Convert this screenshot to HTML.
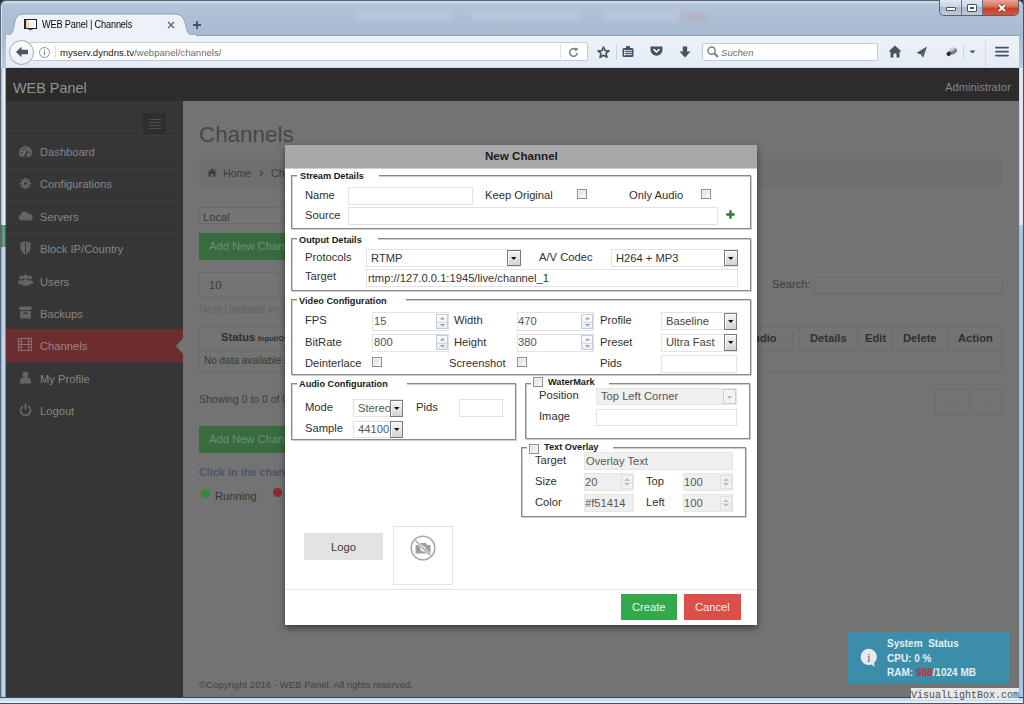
<!DOCTYPE html>
<html><head><meta charset="utf-8">
<style>
*{box-sizing:border-box;margin:0;padding:0}
html,body{width:1024px;height:704px;overflow:hidden;background:#2f343c;font-family:"Liberation Sans",sans-serif}
.a{position:absolute}
.t{position:absolute;white-space:nowrap;line-height:normal}
svg{overflow:visible}
</style></head><body>
<div class="a" style="left:0px;top:0px;width:1024px;height:704px;background:linear-gradient(#d3dfec 0px,#b2c4da 4px,#adbfd5 18px,#a9bbd0 35px,#b9cde3 70px,#c3d7ec 400px,#c4d8ee 704px);border:1px solid #5b6473;border-radius:6px 6px 0 0"></div>
<div class="a" style="left:356px;top:11px;width:94px;height:10px;background:rgba(225,232,242,.22);filter:blur(2.5px)"></div>
<div class="a" style="left:472px;top:11px;width:106px;height:10px;background:rgba(225,232,242,.22);filter:blur(2.5px)"></div>
<div class="a" style="left:604px;top:11px;width:108px;height:10px;background:rgba(225,232,242,.18);filter:blur(2.5px)"></div>
<div class="a" style="left:680px;top:12px;width:30px;height:9px;background:rgba(170,120,130,.25);filter:blur(2.5px)"></div>
<div class="a" style="left:939px;top:0px;width:80px;height:16px;border:1px solid #57606e;border-top:none;border-radius:0 0 5px 5px;overflow:hidden;background:linear-gradient(#dfe7f1,#c9d5e3 45%,#a9b9cc 50%,#bfcbdb)"><div style="position:absolute;left:21px;top:0;width:1px;height:16px;background:#6a7484"></div><div style="position:absolute;left:42px;top:0;width:1px;height:16px;background:#6a7484"></div><div style="position:absolute;left:43px;top:0;width:37px;height:16px;background:linear-gradient(#e8a79a,#d66a55 45%,#c7402a 50%,#d7593f)"></div><div style="position:absolute;left:6px;top:7px;width:10px;height:4px;background:#fff;border:1px solid #4a5260;border-radius:1px"></div><div style="position:absolute;left:27px;top:4px;width:10px;height:8px;background:#fff;border:1px solid #4a5260;border-radius:1px"><div style="position:absolute;left:2px;top:2px;width:4px;height:2px;border:1px solid #4a5260"></div></div></div>
<svg class="a" style="left:998px;top:4px;" width="8" height="8" viewBox="0 0 8 8"><path d="M1 1 L7 7 M7 1 L1 7" stroke="#6a3a30" stroke-width="3.4"/><path d="M1 1 L7 7 M7 1 L1 7" stroke="#fff" stroke-width="2.1"/></svg>
<svg class="a" style="left:0px;top:13px;" width="198" height="24" viewBox="0 0 198 24"><path d="M6 22.5 C11 22.5 13 20 14 13 C15 5 17 1 24 1 L174 1 C182 1 184 5 186 13 C187 20 189 22.5 196 22.5" fill="#edf2f9" stroke="#8f9eb3" stroke-width="1"/><rect x="6" y="22.5" width="190" height="2" fill="#eef3f9"/></svg>
<svg class="a" style="left:24px;top:19px;" width="13" height="13" viewBox="0 0 13 13"><rect x="0.5" y="0.5" width="12" height="9" fill="#fff" stroke="#2a2620" stroke-width="1"/><rect x="0" y="0" width="2" height="10" fill="#2e2010"/><rect x="2" y="1" width="3" height="8" fill="#e8d2b0" opacity="0.8"/><path d="M3 5 H10 M3 7 H9" stroke="#d8d0c8" stroke-width="0.8"/><rect x="4.5" y="10" width="4" height="1.2" fill="#555"/></svg>
<div class="t" style="left:42px;top:18px;font-size:10.6px;color:#0a0a0a;font-weight:normal;font-family:'Liberation Sans';letter-spacing:-0.2px;transform:scaleX(0.87);transform-origin:0 0">WEB Panel | Channels</div>
<svg class="a" style="left:167px;top:21px;" width="8" height="8" viewBox="0 0 8 8"><path d="M1 1 L7 7 M7 1 L1 7" stroke="#6b6f76" stroke-width="1.6"/></svg>
<svg class="a" style="left:192px;top:20px;" width="10" height="10" viewBox="0 0 10 10"><path d="M5 1 V9 M1 5 H9" stroke="#4a5160" stroke-width="1.8"/></svg>
<div class="a" style="left:6px;top:35px;width:1013px;height:33px;background:linear-gradient(#eef3f9,#e4ebf4)"></div>
<div class="a" style="left:196px;top:35px;width:823px;height:1px;background:#8f9eb3"></div>
<div class="a" style="left:6px;top:67px;width:1013px;height:1px;background:#cfd8e3"></div>
<div class="a" style="left:28px;top:42px;width:560px;height:19px;background:#fff;border:1px solid #c3ccd8;border-radius:2px"></div>
<div class="a" style="left:9px;top:40px;width:25px;height:25px;border-radius:50%;background:linear-gradient(#fbfcfd,#e9eef4);border:1px solid #9ea9b8"></div>
<svg class="a" style="left:15px;top:46px;" width="14" height="12" viewBox="0 0 14 12"><path d="M1 6 L6.5 0.8 L6.5 3.8 L13 3.8 L13 8.2 L6.5 8.2 L6.5 11.2 Z" fill="#4c5562"/></svg>
<div class="a" style="left:39px;top:47px;width:11px;height:11px;border-radius:50%;border:1px solid #8f959c"></div>
<div class="a" style="left:44px;top:49px;width:1px;height:1px;background:#7d838a"></div>
<div class="a" style="left:44px;top:51px;width:1px;height:4px;background:#7d838a"></div>
<div class="a" style="left:55px;top:46px;width:1px;height:12px;background:#d8dde3"></div>
<div class="t" style="left:60px;top:47px;font-size:9.6px;color:#1b1b1b;font-weight:normal;font-family:'Liberation Sans';"><span style="color:#1b1b1b">myserv.dyndns.tv</span><span style="color:#6d6d6d">/webpanel/channels/</span></div>
<div class="a" style="left:560px;top:44px;width:1px;height:15px;background:#dfe3e8"></div>
<svg class="a" style="left:569px;top:48px;" width="10" height="9" viewBox="0 0 10 9"><path d="M8.3 4.8 A3.8 3.8 0 1 1 6.6 1.3" fill="none" stroke="#7b8088" stroke-width="1.5"/><path d="M5.2 -0.6 L9.4 0.6 L6.6 3.8 Z" fill="#7b8088"/></svg>
<svg class="a" style="left:597px;top:46px;" width="13" height="12" viewBox="0 0 13 12"><path d="M6.5 1 L8.1 4.6 L12 4.9 L9 7.4 L10 11.3 L6.5 9.2 L3 11.3 L4 7.4 L1 4.9 L4.9 4.6 Z" fill="none" stroke="#475260" stroke-width="1.6" stroke-linejoin="round"/></svg>
<div class="a" style="left:616px;top:45px;width:1px;height:15px;background:#c9d1db"></div>
<svg class="a" style="left:622px;top:46px;" width="12" height="11" viewBox="0 0 12 11"><rect x="0.5" y="2" width="11" height="9" rx="1.5" fill="#475260"/><rect x="4" y="0" width="4" height="3" rx="0.8" fill="#475260"/><path d="M3 4.6 H10 M3 6.6 H10 M3 8.6 H10" stroke="#e8eef6" stroke-width="0.9"/><path d="M2.6 3.8 V9.6" stroke="#e8eef6" stroke-width="0.9"/></svg>
<svg class="a" style="left:650px;top:46px;" width="13" height="10" viewBox="0 0 13 10"><path d="M0.5 0.5 H12.5 V4 A6 5.8 0 0 1 0.5 4 Z" fill="#475260"/><path d="M3.6 3.2 L6.5 6 L9.4 3.2" fill="none" stroke="#fff" stroke-width="1.6"/></svg>
<svg class="a" style="left:679px;top:46px;" width="12" height="12" viewBox="0 0 12 12"><path d="M3.8 0.5 H8.2 V5.5 H11.5 L6 11.5 L0.5 5.5 H3.8 Z" fill="#475260"/></svg>
<div class="a" style="left:702px;top:43px;width:176px;height:18px;background:#fff;border:1px solid #c3ccd8;border-radius:2px"></div>
<svg class="a" style="left:707px;top:46px;" width="12" height="12" viewBox="0 0 12 12"><circle cx="4.6" cy="4.6" r="3.6" fill="none" stroke="#7b8088" stroke-width="1.5"/><path d="M7.3 7.3 L11 11" stroke="#7b8088" stroke-width="2"/></svg>
<div class="t" style="left:721px;top:47px;font-size:9.6px;color:#6f6f6f;font-weight:normal;font-family:'Liberation Sans';font-style:italic">Suchen</div>
<svg class="a" style="left:888px;top:45px;" width="14" height="13" viewBox="0 0 14 13"><path d="M7 0.5 L13.5 6.5 H11.5 V12.5 H8.5 V8.5 H5.5 V12.5 H2.5 V6.5 H0.5 Z" fill="#475260"/></svg>
<svg class="a" style="left:916px;top:46px;" width="12" height="12" viewBox="0 0 12 12"><path d="M0.5 7 L11 0.5 L7.2 11.8 L5.2 8.6 Z" fill="#475260"/><path d="M11 0.5 L5.2 8.6 L5.8 11 Z" fill="#6b7480"/></svg>
<svg class="a" style="left:945px;top:46px;" width="14" height="12" viewBox="0 0 14 12"><g transform="rotate(-30 7 6)"><ellipse cx="8" cy="6" rx="4.5" ry="2.6" fill="#8d9096"/><ellipse cx="8.5" cy="3.6" rx="3" ry="1.6" fill="#c9cdd3"/><circle cx="3.2" cy="6" r="2.2" fill="#2e3238"/><path d="M6 6 V8.5 M8.5 6 V8.8 M11 6 V8.2" stroke="#555" stroke-width="0.8"/></g></svg>
<div class="a" style="left:963px;top:45px;width:1px;height:14px;background:#c9d1db"></div>
<svg class="a" style="left:969px;top:50px;" width="7" height="4" viewBox="0 0 7 4"><path d="M0.5 0.5 H6.5 L3.5 3.5 Z" fill="#475260"/></svg>
<div class="a" style="left:985px;top:39px;width:1px;height:27px;background:#d3dbe5"></div>
<svg class="a" style="left:995px;top:46px;" width="14" height="12" viewBox="0 0 14 12"><path d="M1 1.6 H13 M1 5.6 H13 M1 9.6 H13" stroke="#475260" stroke-width="1.9" stroke-linecap="round"/></svg>
<div class="a" style="left:1px;top:68px;width:5px;height:157px;background:linear-gradient(90deg,#9fb0c4,#e6edf5 40%,#dfe7f0 70%,#7f8a98)"></div>
<div class="a" style="left:1px;top:225px;width:5px;height:22px;background:linear-gradient(90deg,#3a6a55,#6aa58a 40%,#5f9a80 70%,#3c4a48)"></div>
<div class="a" style="left:1px;top:247px;width:5px;height:450px;background:linear-gradient(90deg,#8fa8c4,#c9dcf0 40%,#b9d2ea 70%,#5f6d7e)"></div>
<div class="a" style="left:1019px;top:68px;width:4px;height:157px;background:linear-gradient(90deg,#c8d2de,#e6edf5 50%,#d5dee9)"></div>
<div class="a" style="left:1019px;top:225px;width:4px;height:472px;background:linear-gradient(90deg,#9ab6d6,#b3cde8 50%,#9fbadb)"></div>
<div class="a" style="left:0px;top:697px;width:1024px;height:1px;background:#3c4450"></div>
<div class="a" style="left:0px;top:698px;width:1024px;height:4px;background:#c2dcf4"></div>
<div class="a" style="left:0px;top:701px;width:1024px;height:2px;background:#e2f0fa"></div>
<div class="a" style="left:0px;top:703px;width:1024px;height:1px;background:#4a5360"></div>
<div class="a" style="left:1023px;top:0px;width:1px;height:704px;background:#4a5360"></div>
<div class="a" style="left:1px;top:6px;width:1px;height:62px;background:rgba(255,255,255,.55)"></div>
<div class="a" style="left:6px;top:68px;width:1013px;height:629px;background:#737373"></div>
<div class="a" style="left:6px;top:68px;width:1013px;height:33px;background:#2c2c2c"></div>
<div class="t" style="left:13px;top:80px;font-size:14.4px;color:#929292;font-weight:normal;font-family:'Liberation Sans';">WEB Panel</div>
<div class="t" style="left:945px;top:81px;font-size:11.2px;color:#868686;font-weight:normal;font-family:'Liberation Sans';">Administrator</div>
<div class="a" style="left:6px;top:101px;width:177px;height:596px;background:#363636"></div>
<div class="a" style="left:143px;top:113px;width:23px;height:22px;background:#2e2e2e"></div>
<div class="a" style="left:149px;top:119px;width:12px;height:1px;background:#4e4e4e"></div>
<div class="a" style="left:149px;top:122px;width:12px;height:1px;background:#4e4e4e"></div>
<div class="a" style="left:149px;top:125px;width:12px;height:1px;background:#4e4e4e"></div>
<div class="a" style="left:149px;top:128px;width:12px;height:1px;background:#4e4e4e"></div>
<div class="a" style="left:6px;top:134px;width:177px;height:1px;background:#323232"></div>
<div class="a" style="left:6px;top:135px;width:177px;height:1px;background:#3d3d3d"></div>
<div class="a" style="left:6px;top:167px;width:177px;height:1px;background:#323232"></div>
<div class="a" style="left:6px;top:168px;width:177px;height:1px;background:#3d3d3d"></div>
<div class="a" style="left:6px;top:199px;width:177px;height:1px;background:#323232"></div>
<div class="a" style="left:6px;top:200px;width:177px;height:1px;background:#3d3d3d"></div>
<div class="a" style="left:6px;top:231px;width:177px;height:1px;background:#323232"></div>
<div class="a" style="left:6px;top:232px;width:177px;height:1px;background:#3d3d3d"></div>
<div class="a" style="left:6px;top:264px;width:177px;height:1px;background:#323232"></div>
<div class="a" style="left:6px;top:265px;width:177px;height:1px;background:#3d3d3d"></div>
<div class="a" style="left:6px;top:296px;width:177px;height:1px;background:#323232"></div>
<div class="a" style="left:6px;top:297px;width:177px;height:1px;background:#3d3d3d"></div>
<div class="a" style="left:6px;top:329px;width:177px;height:1px;background:#323232"></div>
<div class="a" style="left:6px;top:330px;width:177px;height:1px;background:#3d3d3d"></div>
<div class="a" style="left:6px;top:361px;width:177px;height:1px;background:#323232"></div>
<div class="a" style="left:6px;top:362px;width:177px;height:1px;background:#3d3d3d"></div>
<div class="a" style="left:6px;top:393px;width:177px;height:1px;background:#323232"></div>
<div class="a" style="left:6px;top:394px;width:177px;height:1px;background:#3d3d3d"></div>
<div class="a" style="left:6px;top:329px;width:177px;height:33px;background:#6b2d2d"></div>
<svg class="a" style="left:176px;top:338px;" width="7" height="16" viewBox="0 0 7 16"><path d="M7 0 L0 8 L7 16 Z" fill="#737373"/></svg>
<div class="t" style="left:40px;top:146px;font-size:11.2px;color:#868686;font-weight:normal;font-family:'Liberation Sans';">Dashboard</div>
<div class="t" style="left:40px;top:178px;font-size:11.2px;color:#868686;font-weight:normal;font-family:'Liberation Sans';">Configurations</div>
<div class="t" style="left:40px;top:211px;font-size:11.2px;color:#868686;font-weight:normal;font-family:'Liberation Sans';">Servers</div>
<div class="t" style="left:40px;top:243px;font-size:11.2px;color:#868686;font-weight:normal;font-family:'Liberation Sans';">Block IP/Country</div>
<div class="t" style="left:40px;top:276px;font-size:11.2px;color:#868686;font-weight:normal;font-family:'Liberation Sans';">Users</div>
<div class="t" style="left:40px;top:308px;font-size:11.2px;color:#868686;font-weight:normal;font-family:'Liberation Sans';">Backups</div>
<div class="t" style="left:40px;top:340px;font-size:11.2px;color:#a08686;font-weight:normal;font-family:'Liberation Sans';">Channels</div>
<div class="t" style="left:40px;top:373px;font-size:11.2px;color:#868686;font-weight:normal;font-family:'Liberation Sans';">My Profile</div>
<div class="t" style="left:40px;top:405px;font-size:11.2px;color:#868686;font-weight:normal;font-family:'Liberation Sans';">Logout</div>
<svg class="a" style="left:19px;top:146px;" width="13" height="11" viewBox="0 0 13 11"><path d="M1.63 10.8 A6.5 6.5 0 1 1 11.37 10.8 Z" fill="#646464"/><path d="M6.5 9.8 L8.6 4.3" stroke="#363636" stroke-width="1.3"/><circle cx="6.5" cy="9.6" r="1.2" fill="#363636"/><circle cx="2.6" cy="6.8" r="0.8" fill="#363636"/><circle cx="3.9" cy="3.6" r="0.8" fill="#363636"/><circle cx="6.5" cy="2.3" r="0.8" fill="#363636"/><circle cx="10.4" cy="6.8" r="0.8" fill="#363636"/></svg>
<svg class="a" style="left:19px;top:177px;" width="13" height="13" viewBox="0 0 13 13"><g transform="translate(6.5 6.5) scale(0.86) translate(-6.5 -6.5)"><circle cx="6.5" cy="6.5" r="4.4" fill="#646464"/><rect x="5.2" y="0" width="2.6" height="3" fill="#646464" transform="rotate(0 6.5 6.5)"/><rect x="5.2" y="0" width="2.6" height="3" fill="#646464" transform="rotate(45 6.5 6.5)"/><rect x="5.2" y="0" width="2.6" height="3" fill="#646464" transform="rotate(90 6.5 6.5)"/><rect x="5.2" y="0" width="2.6" height="3" fill="#646464" transform="rotate(135 6.5 6.5)"/><rect x="5.2" y="0" width="2.6" height="3" fill="#646464" transform="rotate(180 6.5 6.5)"/><rect x="5.2" y="0" width="2.6" height="3" fill="#646464" transform="rotate(225 6.5 6.5)"/><rect x="5.2" y="0" width="2.6" height="3" fill="#646464" transform="rotate(270 6.5 6.5)"/><rect x="5.2" y="0" width="2.6" height="3" fill="#646464" transform="rotate(315 6.5 6.5)"/><circle cx="6.5" cy="6.5" r="1.7" fill="#363636"/></g></svg>
<svg class="a" style="left:18px;top:211px;" width="15" height="10" viewBox="0 0 15 10"><path d="M3 9.5 A3 3 0 0 1 2.5 3.8 A4 4 0 0 1 10 2.8 A3.2 3.2 0 0 1 12.2 9.5 Z" fill="#646464"/></svg>
<svg class="a" style="left:20px;top:241px;" width="11" height="14" viewBox="0 0 11 14"><path d="M0.5 1.5 L5.5 0.5 L10.5 1.5 V7 C10.5 10.5 7.5 12.5 5.5 13.5 C3.5 12.5 0.5 10.5 0.5 7 Z" fill="#646464"/><path d="M5.5 2 V12" stroke="#363636" stroke-width="1"/></svg>
<svg class="a" style="left:18px;top:274px;" width="15" height="12" viewBox="0 0 15 12"><circle cx="7.5" cy="3" r="2.5" fill="#646464"/><circle cx="3" cy="3.5" r="2" fill="#646464"/><circle cx="12" cy="3.5" r="2" fill="#646464"/><path d="M3.5 11.5 V8.5 A4 3 0 0 1 11.5 8.5 V11.5 Z" fill="#646464"/><path d="M0 10 V8 A3 2.5 0 0 1 4 6.5 V10 Z M15 10 V8 A3 2.5 0 0 0 11 6.5 V10 Z" fill="#646464"/></svg>
<svg class="a" style="left:19px;top:306px;" width="13" height="13" viewBox="0 0 13 13"><rect x="0.5" y="0.5" width="12" height="3.5" fill="#646464"/><rect x="1.2" y="5" width="10.6" height="7.5" fill="#646464"/><rect x="4.5" y="6.5" width="4" height="1.5" fill="#363636"/></svg>
<svg class="a" style="left:18px;top:338px;" width="14" height="13" viewBox="0 0 14 13"><rect x="0.5" y="0.5" width="13" height="12" fill="none" stroke="#8a6a6a" stroke-width="1.2"/><path d="M3.5 0.5 V12.5 M10.5 0.5 V12.5 M0.5 6.5 H13.5 M0.5 3.5 H3.5 M0.5 9.5 H3.5 M10.5 3.5 H13.5 M10.5 9.5 H13.5" stroke="#8a6a6a" stroke-width="1"/></svg>
<svg class="a" style="left:20px;top:371px;" width="11" height="13" viewBox="0 0 11 13"><circle cx="5.5" cy="3.5" r="3" fill="#646464"/><path d="M0 12.5 V10 A5.5 4 0 0 1 11 10 V12.5 Z" fill="#646464"/></svg>
<svg class="a" style="left:19px;top:403px;" width="13" height="13" viewBox="0 0 13 13"><path d="M3.8 3.2 A5 5 0 1 0 9.2 3.2" fill="none" stroke="#646464" stroke-width="1.8"/><path d="M6.5 0.5 V6.5" stroke="#646464" stroke-width="1.8"/></svg>
<div class="t" style="left:199px;top:122px;font-size:22.4px;color:#474747;font-weight:normal;font-family:'Liberation Sans';">Channels</div>
<div class="a" style="left:199px;top:159px;width:803px;height:28px;background:#6f6f6f"></div>
<svg class="a" style="left:207px;top:168px;" width="10" height="9" viewBox="0 0 10 9"><path d="M5 0.5 L10 5 H8.5 V8.8 H6.2 V6 H3.8 V8.8 H1.5 V5 H0 Z M7 1.2 H8.3 V3 L7 2 Z" fill="#3e3e3e"/></svg>
<div class="t" style="left:223px;top:167px;font-size:10.6px;color:#3b3b3b;font-weight:normal;font-family:'Liberation Sans';">Home</div>
<svg class="a" style="left:259px;top:170px;" width="5" height="7" viewBox="0 0 5 7"><path d="M0.8 0.8 L3.8 3.3 L0.8 5.8" fill="none" stroke="#4e4e4e" stroke-width="1.5"/></svg>
<div class="t" style="left:271px;top:167px;font-size:10.6px;color:#3b3b3b;font-weight:normal;font-family:'Liberation Sans';">Channels</div>
<div class="a" style="left:199px;top:207px;width:300px;height:17px;border:1px solid #6b6b6b;background:#757575"></div>
<div class="t" style="left:203px;top:211px;font-size:11.2px;color:#3a3a3a;font-weight:normal;font-family:'Liberation Sans';">Local</div>
<div class="a" style="left:199px;top:233px;width:110px;height:27px;background:#386b3d"></div>
<div class="t" style="left:209px;top:240px;font-size:11.2px;color:#6f8f72;font-weight:normal;font-family:'Liberation Sans';">Add New Channel</div>
<div class="a" style="left:199px;top:272px;width:80px;height:25px;border:1px solid #6c6c6c;background:#747474"></div>
<div class="a" style="left:278px;top:272px;width:30px;height:25px;border:1px solid #6c6c6c;background:#747474"></div>
<div class="t" style="left:209px;top:279px;font-size:11.2px;color:#3c3c3c;font-weight:normal;font-family:'Liberation Sans';">10</div>
<div class="t" style="left:199px;top:303px;font-size:10.8px;color:#626262;font-weight:normal;font-family:'Liberation Sans';">Next Updated in: 6</div>
<div class="t" style="left:772px;top:278px;font-size:11.2px;color:#3c3c3c;font-weight:normal;font-family:'Liberation Sans';">Search:</div>
<div class="a" style="left:814px;top:277px;width:188px;height:17px;border:1px solid #6c6c6c;background:#757575"></div>
<div class="a" style="left:199px;top:326px;width:803px;height:47px;border:1px solid #6b6b6b"></div>
<div class="a" style="left:199px;top:350px;width:803px;height:1px;background:#6b6b6b"></div>
<div class="a" style="left:799px;top:326px;width:1px;height:24px;background:#6b6b6b"></div>
<div class="a" style="left:857px;top:326px;width:1px;height:24px;background:#6b6b6b"></div>
<div class="a" style="left:892px;top:326px;width:1px;height:24px;background:#6b6b6b"></div>
<div class="a" style="left:948px;top:326px;width:1px;height:24px;background:#6b6b6b"></div>
<div class="t" style="left:221px;top:331px;font-size:11.2px;color:#2f2f2f;font-weight:bold;font-family:'Liberation Sans';">Status</div>
<div class="t" style="left:258px;top:334px;font-size:7.5px;color:#2f2f2f;font-weight:bold;font-family:'Liberation Sans';">Input/Output</div>
<div class="t" style="left:745px;top:332px;font-size:11.2px;color:#2f2f2f;font-weight:bold;font-family:'Liberation Sans';">Audio</div>
<svg class="a" style="left:790px;top:333px;" width="5" height="10" viewBox="0 0 5 10"><path d="M0 4 L2.5 0.5 L5 4 Z M0 6 L2.5 9.5 L5 6 Z" fill="#6a6a6a"/></svg>
<div class="t" style="left:810px;top:332px;font-size:11.2px;color:#2f2f2f;font-weight:bold;font-family:'Liberation Sans';">Details</div>
<div class="t" style="left:865px;top:332px;font-size:11.2px;color:#2f2f2f;font-weight:bold;font-family:'Liberation Sans';">Edit</div>
<div class="t" style="left:903px;top:332px;font-size:11.2px;color:#2f2f2f;font-weight:bold;font-family:'Liberation Sans';">Delete</div>
<div class="t" style="left:958px;top:332px;font-size:11.2px;color:#2f2f2f;font-weight:bold;font-family:'Liberation Sans';">Action</div>
<div class="t" style="left:204px;top:355px;font-size:10px;color:#383838;font-weight:normal;font-family:'Liberation Sans';">No data available in table</div>
<div class="t" style="left:199px;top:394px;font-size:10.4px;color:#3c3c3c;font-weight:normal;font-family:'Liberation Sans';">Showing 0 to 0 of 0 entries</div>
<div class="a" style="left:935px;top:389px;width:67px;height:26px;border:1px solid #6b6b6b"></div>
<div class="a" style="left:969px;top:389px;width:1px;height:26px;background:#6b6b6b"></div>
<svg class="a" style="left:950px;top:398px;" width="5" height="8" viewBox="0 0 5 8"><path d="M4 0.8 L1 4 L4 7.2" fill="none" stroke="#666" stroke-width="1"/></svg>
<svg class="a" style="left:984px;top:398px;" width="5" height="8" viewBox="0 0 5 8"><path d="M1 0.8 L4 4 L1 7.2" fill="none" stroke="#666" stroke-width="1"/></svg>
<div class="a" style="left:199px;top:426px;width:110px;height:27px;background:#386b3d"></div>
<div class="t" style="left:209px;top:433px;font-size:11.2px;color:#6f8f72;font-weight:normal;font-family:'Liberation Sans';">Add New Channel</div>
<div class="t" style="left:199px;top:466px;font-size:10.8px;color:#4a5666;font-weight:bold;font-family:'Liberation Sans';">Click in the channel name to see the details</div>
<div class="a" style="left:201px;top:489px;width:9px;height:9px;border-radius:50%;background:#2f8a3a"></div>
<div class="t" style="left:215px;top:490px;font-size:11.2px;color:#333;font-weight:normal;font-family:'Liberation Sans';">Running</div>
<div class="a" style="left:273px;top:488px;width:9px;height:9px;border-radius:50%;background:#8a2a2a"></div>
<div class="t" style="left:199px;top:679px;font-size:9.6px;color:#424242;font-weight:normal;font-family:'Liberation Sans';">©Copyright 2016 - WEB Panel. All rights reserved.</div>
<div class="a" style="left:847px;top:632px;width:163px;height:52px;background:#3b8daa"></div>
<svg class="a" style="left:860px;top:648px;" width="18" height="20" viewBox="0 0 18 20"><circle cx="8.75" cy="8.9" r="8.1" fill="#e6ecee"/><path d="M10.5 15.5 L14.7 19.3 L13.8 13.8 Z" fill="#e6ecee"/><text x="8.75" y="13.6" font-size="13" font-family="Liberation Serif" text-anchor="middle" fill="#5e6e76">i</text></svg>
<div class="t" style="left:887px;top:638px;font-size:10px;color:#e2f1f6;font-weight:bold;font-family:'Liberation Sans';">System&nbsp; Status</div>
<div class="t" style="left:887px;top:653px;font-size:10px;color:#e2f1f6;font-weight:bold;font-family:'Liberation Sans';">CPU: 0 %</div>
<div class="t" style="left:887px;top:667px;font-size:10px;color:#e2f1f6;font-weight:bold;font-family:'Liberation Sans';">RAM: <span style="color:#c0303a">988</span>/1024 MB</div>
<div class="a" style="left:285px;top:145px;width:472px;height:480px;background:#fff;box-shadow:0 3px 7px rgba(0,0,0,.5)"></div>
<div class="a" style="left:285px;top:145px;width:472px;height:23px;background:#a8a8a8"></div>
<div class="a" style="left:285px;top:168px;width:472px;height:1px;background:#cfcfcf"></div>
<div class="t" style="left:485px;top:149px;font-size:11.6px;color:#1c1c1c;font-weight:bold;font-family:'Liberation Sans';">New Channel</div>
<div class="a" style="left:291px;top:175px;width:460px;height:54px;border:1px solid #8a8a8a;box-shadow:inset 1px 1px 0 #cdcdcd, 1px 1px 0 #cdcdcd"></div>
<div class="a" style="left:297px;top:174px;width:82px;height:4px;background:#fff"></div>
<div class="t" style="left:300px;top:171px;font-size:9.2px;color:#1a1a1a;font-weight:bold;font-family:'Liberation Sans';">Stream Details</div>
<div class="t" style="left:305px;top:189px;font-size:11.2px;color:#303030;font-weight:normal;font-family:'Liberation Sans';">Name</div>
<div class="a" style="left:348px;top:187px;width:125px;height:18px;background:#fff;border:1px solid #e3e3e3"></div>
<div class="t" style="left:485px;top:189px;font-size:11.2px;color:#303030;font-weight:normal;font-family:'Liberation Sans';">Keep Original</div>
<div class="a" style="left:577px;top:189px;width:10px;height:10px;border:1px solid #8f8f8f;background:linear-gradient(135deg,#dcdcdc,#fbfbfb);box-shadow:inset 1px 1px 0 #f4f4f4"></div>
<div class="t" style="left:629px;top:189px;font-size:11.2px;color:#303030;font-weight:normal;font-family:'Liberation Sans';">Only Audio</div>
<div class="a" style="left:701px;top:189px;width:10px;height:10px;border:1px solid #8f8f8f;background:linear-gradient(135deg,#dcdcdc,#fbfbfb);box-shadow:inset 1px 1px 0 #f4f4f4"></div>
<div class="t" style="left:305px;top:209px;font-size:11.2px;color:#303030;font-weight:normal;font-family:'Liberation Sans';">Source</div>
<div class="a" style="left:348px;top:207px;width:370px;height:18px;background:#fff;border:1px solid #e3e3e3"></div>
<svg class="a" style="left:726px;top:210px;" width="9" height="9" viewBox="0 0 9 9"><path d="M4.5 0.3 V8.7 M0.3 4.5 H8.7" stroke="#327a3a" stroke-width="2.4"/></svg>
<div class="a" style="left:291px;top:238px;width:460px;height:53px;border:1px solid #8a8a8a;box-shadow:inset 1px 1px 0 #cdcdcd, 1px 1px 0 #cdcdcd"></div>
<div class="a" style="left:297px;top:237px;width:81px;height:4px;background:#fff"></div>
<div class="t" style="left:299px;top:235px;font-size:9.2px;color:#1a1a1a;font-weight:bold;font-family:'Liberation Sans';">Output Details</div>
<div class="t" style="left:305px;top:251px;font-size:11.2px;color:#303030;font-weight:normal;font-family:'Liberation Sans';">Protocols</div>
<div class="a" style="left:366px;top:249px;width:155px;height:18px;background:#fff;border:1px solid #e3e3e3"></div>
<div class="t" style="left:371px;top:252px;font-size:11.2px;color:#333;font-weight:normal;font-family:'Liberation Sans';">RTMP</div>
<div class="a" style="left:507px;top:250px;width:14px;height:16px;background:linear-gradient(#f5f5f5,#d3d3d3);border:1px solid #7a7a7a;box-shadow:inset 1px 1px 0 #fff"></div>
<svg class="a" style="left:511px;top:257px;" width="6" height="3" viewBox="0 0 6 3"><path d="M0 0 H5.5 L2.75 3 Z" fill="#111"/></svg>
<div class="t" style="left:539px;top:251px;font-size:11.2px;color:#303030;font-weight:normal;font-family:'Liberation Sans';">A/V Codec</div>
<div class="a" style="left:611px;top:249px;width:127px;height:18px;background:#fff;border:1px solid #e3e3e3"></div>
<div class="t" style="left:616px;top:252px;font-size:11.2px;color:#333;font-weight:normal;font-family:'Liberation Sans';">H264 + MP3</div>
<div class="a" style="left:724px;top:250px;width:14px;height:16px;background:linear-gradient(#f5f5f5,#d3d3d3);border:1px solid #7a7a7a;box-shadow:inset 1px 1px 0 #fff"></div>
<svg class="a" style="left:728px;top:257px;" width="6" height="3" viewBox="0 0 6 3"><path d="M0 0 H5.5 L2.75 3 Z" fill="#111"/></svg>
<div class="t" style="left:305px;top:270px;font-size:11.2px;color:#303030;font-weight:normal;font-family:'Liberation Sans';">Target</div>
<div class="a" style="left:366px;top:269px;width:372px;height:18px;background:#fff;border:1px solid #e3e3e3"></div>
<div class="t" style="left:368px;top:272px;font-size:11.2px;color:#333;font-weight:normal;font-family:'Liberation Sans';">rtmp://127.0.0.1:1945/live/channel_1</div>
<div class="a" style="left:291px;top:299px;width:460px;height:76px;border:1px solid #8a8a8a;box-shadow:inset 1px 1px 0 #cdcdcd, 1px 1px 0 #cdcdcd"></div>
<div class="a" style="left:297px;top:298px;width:109px;height:4px;background:#fff"></div>
<div class="t" style="left:299px;top:296px;font-size:9.2px;color:#1a1a1a;font-weight:bold;font-family:'Liberation Sans';">Video Configuration</div>
<div class="t" style="left:305px;top:314px;font-size:11.2px;color:#303030;font-weight:normal;font-family:'Liberation Sans';">FPS</div>
<div class="a" style="left:372px;top:312px;width:77px;height:19px;background:#fff;border:1px solid #e3e3e3"></div>
<div class="t" style="left:374px;top:315px;font-size:11.2px;color:#555;font-weight:normal;font-family:'Liberation Sans';">15</div>
<div class="a" style="left:436px;top:314px;width:12px;height:15px;background:linear-gradient(#fbfcfd,#e9edf2);border:1px solid #c5ccd6"></div>
<div class="a" style="left:437px;top:321.5px;width:10px;height:1px;background:#d2d8e0"></div>
<svg class="a" style="left:439.5px;top:317px;" width="5" height="2.5" viewBox="0 0 5 2.5"><path d="M0 2.5 L2.5 0 L5 2.5 Z" fill="#8c9cb6"/></svg>
<svg class="a" style="left:439.5px;top:323.5px;" width="5" height="2.5" viewBox="0 0 5 2.5"><path d="M0 0 L2.5 2.5 L5 0 Z" fill="#8c9cb6"/></svg>
<div class="t" style="left:454px;top:314px;font-size:11.2px;color:#303030;font-weight:normal;font-family:'Liberation Sans';">Width</div>
<div class="a" style="left:517px;top:312px;width:77px;height:19px;background:#fff;border:1px solid #e3e3e3"></div>
<div class="t" style="left:518px;top:315px;font-size:11.2px;color:#555;font-weight:normal;font-family:'Liberation Sans';">470</div>
<div class="a" style="left:581px;top:314px;width:12px;height:15px;background:linear-gradient(#fbfcfd,#e9edf2);border:1px solid #c5ccd6"></div>
<div class="a" style="left:582px;top:321.5px;width:10px;height:1px;background:#d2d8e0"></div>
<svg class="a" style="left:584.5px;top:317px;" width="5" height="2.5" viewBox="0 0 5 2.5"><path d="M0 2.5 L2.5 0 L5 2.5 Z" fill="#8c9cb6"/></svg>
<svg class="a" style="left:584.5px;top:323.5px;" width="5" height="2.5" viewBox="0 0 5 2.5"><path d="M0 0 L2.5 2.5 L5 0 Z" fill="#8c9cb6"/></svg>
<div class="t" style="left:600px;top:314px;font-size:11.2px;color:#303030;font-weight:normal;font-family:'Liberation Sans';">Profile</div>
<div class="a" style="left:661px;top:312px;width:76px;height:18px;background:#fff;border:1px solid #e3e3e3"></div>
<div class="t" style="left:666px;top:315px;font-size:11.2px;color:#444;font-weight:normal;font-family:'Liberation Sans';">Baseline</div>
<div class="a" style="left:724px;top:313px;width:13px;height:17px;background:linear-gradient(#f5f5f5,#d3d3d3);border:1px solid #7a7a7a;box-shadow:inset 1px 1px 0 #fff"></div>
<svg class="a" style="left:728px;top:320px;" width="6" height="3" viewBox="0 0 6 3"><path d="M0 0 H5.5 L2.75 3 Z" fill="#111"/></svg>
<div class="t" style="left:305px;top:336px;font-size:11.2px;color:#303030;font-weight:normal;font-family:'Liberation Sans';">BitRate</div>
<div class="a" style="left:372px;top:334px;width:77px;height:18px;background:#fff;border:1px solid #e3e3e3"></div>
<div class="t" style="left:374px;top:336px;font-size:11.2px;color:#555;font-weight:normal;font-family:'Liberation Sans';">800</div>
<div class="a" style="left:436px;top:335px;width:12px;height:15px;background:linear-gradient(#fbfcfd,#e9edf2);border:1px solid #c5ccd6"></div>
<div class="a" style="left:437px;top:342.5px;width:10px;height:1px;background:#d2d8e0"></div>
<svg class="a" style="left:439.5px;top:338px;" width="5" height="2.5" viewBox="0 0 5 2.5"><path d="M0 2.5 L2.5 0 L5 2.5 Z" fill="#8c9cb6"/></svg>
<svg class="a" style="left:439.5px;top:344.5px;" width="5" height="2.5" viewBox="0 0 5 2.5"><path d="M0 0 L2.5 2.5 L5 0 Z" fill="#8c9cb6"/></svg>
<div class="t" style="left:454px;top:336px;font-size:11.2px;color:#303030;font-weight:normal;font-family:'Liberation Sans';">Height</div>
<div class="a" style="left:517px;top:334px;width:77px;height:18px;background:#fff;border:1px solid #e3e3e3"></div>
<div class="t" style="left:518px;top:336px;font-size:11.2px;color:#555;font-weight:normal;font-family:'Liberation Sans';">380</div>
<div class="a" style="left:581px;top:335px;width:12px;height:15px;background:linear-gradient(#fbfcfd,#e9edf2);border:1px solid #c5ccd6"></div>
<div class="a" style="left:582px;top:342.5px;width:10px;height:1px;background:#d2d8e0"></div>
<svg class="a" style="left:584.5px;top:338px;" width="5" height="2.5" viewBox="0 0 5 2.5"><path d="M0 2.5 L2.5 0 L5 2.5 Z" fill="#8c9cb6"/></svg>
<svg class="a" style="left:584.5px;top:344.5px;" width="5" height="2.5" viewBox="0 0 5 2.5"><path d="M0 0 L2.5 2.5 L5 0 Z" fill="#8c9cb6"/></svg>
<div class="t" style="left:600px;top:336px;font-size:11.2px;color:#303030;font-weight:normal;font-family:'Liberation Sans';">Preset</div>
<div class="a" style="left:661px;top:334px;width:76px;height:18px;background:#fff;border:1px solid #e3e3e3"></div>
<div class="t" style="left:666px;top:336px;font-size:11.2px;color:#444;font-weight:normal;font-family:'Liberation Sans';">Ultra Fast</div>
<div class="a" style="left:724px;top:334px;width:13px;height:17px;background:linear-gradient(#f5f5f5,#d3d3d3);border:1px solid #7a7a7a;box-shadow:inset 1px 1px 0 #fff"></div>
<svg class="a" style="left:728px;top:341px;" width="6" height="3" viewBox="0 0 6 3"><path d="M0 0 H5.5 L2.75 3 Z" fill="#111"/></svg>
<div class="t" style="left:305px;top:357px;font-size:11.2px;color:#303030;font-weight:normal;font-family:'Liberation Sans';">Deinterlace</div>
<div class="a" style="left:372px;top:357px;width:10px;height:10px;border:1px solid #8f8f8f;background:linear-gradient(135deg,#dcdcdc,#fbfbfb);box-shadow:inset 1px 1px 0 #f4f4f4"></div>
<div class="t" style="left:449px;top:357px;font-size:11.2px;color:#303030;font-weight:normal;font-family:'Liberation Sans';">Screenshot</div>
<div class="a" style="left:517px;top:357px;width:10px;height:10px;border:1px solid #8f8f8f;background:linear-gradient(135deg,#dcdcdc,#fbfbfb);box-shadow:inset 1px 1px 0 #f4f4f4"></div>
<div class="t" style="left:600px;top:357px;font-size:11.2px;color:#303030;font-weight:normal;font-family:'Liberation Sans';">Pids</div>
<div class="a" style="left:661px;top:355px;width:76px;height:18px;background:#fff;border:1px solid #e3e3e3"></div>
<div class="a" style="left:291px;top:383px;width:225px;height:57px;border:1px solid #8a8a8a;box-shadow:inset 1px 1px 0 #cdcdcd, 1px 1px 0 #cdcdcd"></div>
<div class="a" style="left:297px;top:382px;width:110px;height:4px;background:#fff"></div>
<div class="t" style="left:299px;top:379px;font-size:9.2px;color:#1a1a1a;font-weight:bold;font-family:'Liberation Sans';">Audio Configuration</div>
<div class="t" style="left:305px;top:401px;font-size:11.2px;color:#303030;font-weight:normal;font-family:'Liberation Sans';">Mode</div>
<div class="a" style="left:353px;top:399px;width:50px;height:18px;background:#fff;border:1px solid #e3e3e3"></div>
<div class="t" style="left:358px;top:402px;font-size:11.2px;color:#555;font-weight:normal;font-family:'Liberation Sans';">Stereo</div>
<div class="t" style="left:416px;top:401px;font-size:11.2px;color:#303030;font-weight:normal;font-family:'Liberation Sans';">Pids</div>
<div class="a" style="left:459px;top:399px;width:44px;height:18px;background:#fff;border:1px solid #e3e3e3"></div>
<div class="t" style="left:305px;top:422px;font-size:11.2px;color:#303030;font-weight:normal;font-family:'Liberation Sans';">Sample</div>
<div class="a" style="left:353px;top:421px;width:50px;height:17px;background:#fff;border:1px solid #e3e3e3"></div>
<div class="t" style="left:358px;top:423px;font-size:11.2px;color:#555;font-weight:normal;font-family:'Liberation Sans';">44100</div>
<div class="a" style="left:390px;top:400px;width:13px;height:17px;background:linear-gradient(#f5f5f5,#d3d3d3);border:1px solid #7a7a7a;box-shadow:inset 1px 1px 0 #fff"></div>
<svg class="a" style="left:394px;top:407px;" width="6" height="3" viewBox="0 0 6 3"><path d="M0 0 H5.5 L2.75 3 Z" fill="#111"/></svg>
<div class="a" style="left:390px;top:421px;width:13px;height:17px;background:linear-gradient(#f5f5f5,#d3d3d3);border:1px solid #7a7a7a;box-shadow:inset 1px 1px 0 #fff"></div>
<svg class="a" style="left:394px;top:428px;" width="6" height="3" viewBox="0 0 6 3"><path d="M0 0 H5.5 L2.75 3 Z" fill="#111"/></svg>
<div class="a" style="left:525px;top:383px;width:225px;height:56px;border:1px solid #8a8a8a;box-shadow:inset 1px 1px 0 #cdcdcd, 1px 1px 0 #cdcdcd"></div>
<div class="a" style="left:531px;top:382px;width:78px;height:4px;background:#fff"></div>
<div class="a" style="left:533px;top:377px;width:10px;height:10px;border:1px solid #8f8f8f;background:linear-gradient(135deg,#dcdcdc,#fbfbfb);box-shadow:inset 1px 1px 0 #f4f4f4"></div>
<div class="t" style="left:548px;top:377px;font-size:9.2px;color:#1a1a1a;font-weight:bold;font-family:'Liberation Sans';">WaterMark</div>
<div class="t" style="left:539px;top:389px;font-size:11.2px;color:#303030;font-weight:normal;font-family:'Liberation Sans';">Position</div>
<div class="a" style="left:596px;top:388px;width:141px;height:17px;background:#efefef;border:1px solid #e6e6e6"></div>
<div class="t" style="left:601px;top:390px;font-size:11.2px;color:#555;font-weight:normal;font-family:'Liberation Sans';">Top Left Corner</div>
<div class="a" style="left:723px;top:389px;width:13px;height:15px;background:#f3f3f3;border:1px solid #cfcfcf"></div>
<svg class="a" style="left:727px;top:396px;" width="6" height="3" viewBox="0 0 6 3"><path d="M0 0 H5 L2.5 3 Z" fill="#b5b5b5"/></svg>
<div class="t" style="left:539px;top:410px;font-size:11.2px;color:#303030;font-weight:normal;font-family:'Liberation Sans';">Image</div>
<div class="a" style="left:596px;top:409px;width:141px;height:17px;background:#fff;border:1px solid #e3e3e3"></div>
<div class="a" style="left:521px;top:447px;width:225px;height:70px;border:1px solid #8a8a8a;box-shadow:inset 1px 1px 0 #cdcdcd, 1px 1px 0 #cdcdcd"></div>
<div class="a" style="left:527px;top:446px;width:86px;height:4px;background:#fff"></div>
<div class="a" style="left:529px;top:444px;width:10px;height:10px;border:1px solid #8f8f8f;background:linear-gradient(135deg,#dcdcdc,#fbfbfb);box-shadow:inset 1px 1px 0 #f4f4f4"></div>
<div class="t" style="left:544px;top:442px;font-size:9.2px;color:#1a1a1a;font-weight:bold;font-family:'Liberation Sans';">Text Overlay</div>
<div class="t" style="left:535px;top:454px;font-size:11.2px;color:#303030;font-weight:normal;font-family:'Liberation Sans';">Target</div>
<div class="a" style="left:584px;top:452px;width:149px;height:18px;background:#efefef;border:1px solid #e6e6e6"></div>
<div class="t" style="left:586px;top:455px;font-size:11.2px;color:#585858;font-weight:normal;font-family:'Liberation Sans';">Overlay Text</div>
<div class="t" style="left:535px;top:475px;font-size:11.2px;color:#303030;font-weight:normal;font-family:'Liberation Sans';">Size</div>
<div class="a" style="left:584px;top:473px;width:50px;height:18px;background:#efefef;border:1px solid #e6e6e6"></div>
<div class="t" style="left:585px;top:476px;font-size:11.2px;color:#585858;font-weight:normal;font-family:'Liberation Sans';">20</div>
<div class="a" style="left:621px;top:475px;width:12px;height:14px;background:#f2f2f2;border:1px solid #dedede"></div>
<div class="a" style="left:622px;top:482.0px;width:10px;height:1px;background:#e3e3e3"></div>
<svg class="a" style="left:624px;top:478px;" width="6" height="3" viewBox="0 0 6 3"><path d="M0 3 L3 0 L6 3 Z" fill="#bdbdbd"/></svg>
<svg class="a" style="left:624px;top:483px;" width="6" height="3" viewBox="0 0 6 3"><path d="M0 0 L3 3 L6 0 Z" fill="#bdbdbd"/></svg>
<div class="t" style="left:646px;top:475px;font-size:11.2px;color:#303030;font-weight:normal;font-family:'Liberation Sans';">Top</div>
<div class="a" style="left:683px;top:473px;width:50px;height:18px;background:#efefef;border:1px solid #e6e6e6"></div>
<div class="t" style="left:684px;top:476px;font-size:11.2px;color:#585858;font-weight:normal;font-family:'Liberation Sans';">100</div>
<div class="a" style="left:720px;top:475px;width:12px;height:14px;background:#f2f2f2;border:1px solid #dedede"></div>
<div class="a" style="left:721px;top:482.0px;width:10px;height:1px;background:#e3e3e3"></div>
<svg class="a" style="left:723px;top:478px;" width="6" height="3" viewBox="0 0 6 3"><path d="M0 3 L3 0 L6 3 Z" fill="#bdbdbd"/></svg>
<svg class="a" style="left:723px;top:483px;" width="6" height="3" viewBox="0 0 6 3"><path d="M0 0 L3 3 L6 0 Z" fill="#bdbdbd"/></svg>
<div class="t" style="left:535px;top:496px;font-size:11.2px;color:#303030;font-weight:normal;font-family:'Liberation Sans';">Color</div>
<div class="a" style="left:584px;top:494px;width:50px;height:18px;background:#efefef;border:1px solid #e6e6e6"></div>
<div class="t" style="left:585px;top:497px;font-size:11.2px;color:#585858;font-weight:normal;font-family:'Liberation Sans';">#f51414</div>
<div class="t" style="left:646px;top:496px;font-size:11.2px;color:#303030;font-weight:normal;font-family:'Liberation Sans';">Left</div>
<div class="a" style="left:683px;top:494px;width:50px;height:18px;background:#efefef;border:1px solid #e6e6e6"></div>
<div class="t" style="left:684px;top:497px;font-size:11.2px;color:#585858;font-weight:normal;font-family:'Liberation Sans';">100</div>
<div class="a" style="left:720px;top:496px;width:12px;height:14px;background:#f2f2f2;border:1px solid #dedede"></div>
<div class="a" style="left:721px;top:503.0px;width:10px;height:1px;background:#e3e3e3"></div>
<svg class="a" style="left:723px;top:499px;" width="6" height="3" viewBox="0 0 6 3"><path d="M0 3 L3 0 L6 3 Z" fill="#bdbdbd"/></svg>
<svg class="a" style="left:723px;top:504px;" width="6" height="3" viewBox="0 0 6 3"><path d="M0 0 L3 3 L6 0 Z" fill="#bdbdbd"/></svg>
<div class="a" style="left:304px;top:533px;width:79px;height:27px;background:#e3e3e3"></div>
<div class="t" style="left:331px;top:541px;font-size:11.2px;color:#3a3a3a;font-weight:normal;font-family:'Liberation Sans';">Logo</div>
<div class="a" style="left:393px;top:526px;width:60px;height:59px;border:1px solid #e2e2e2"></div>
<svg class="a" style="left:410px;top:535px;" width="26" height="26" viewBox="0 0 26 26"><circle cx="13" cy="13" r="11.8" fill="none" stroke="#a9a9a9" stroke-width="1.6"/><path d="M5.5 10 H9 L10.2 8 H15.8 L17 10 H20.5 V18.5 H5.5 Z" fill="#9d9d9d"/><circle cx="13" cy="13.8" r="2.6" fill="#fff"/><circle cx="13" cy="13.8" r="1.4" fill="#9d9d9d"/><path d="M5.5 5.5 L20.5 20.5" stroke="#fff" stroke-width="2.6"/><path d="M5.5 5.5 L20.5 20.5" stroke="#a9a9a9" stroke-width="1.4"/></svg>
<div class="a" style="left:285px;top:589px;width:472px;height:1px;background:#e5e5e5"></div>
<div class="a" style="left:621px;top:594px;width:56px;height:26px;background:#34a94b"></div>
<div class="t" style="left:632px;top:601px;font-size:11.2px;color:#e8f5ea;font-weight:normal;font-family:'Liberation Sans';">Create</div>
<div class="a" style="left:684px;top:594px;width:57px;height:26px;background:#db4f4a"></div>
<div class="t" style="left:695px;top:601px;font-size:11.2px;color:#fbeaea;font-weight:normal;font-family:'Liberation Sans';">Cancel</div>
<div class="a" style="left:911px;top:688px;width:108px;height:12px;background:#e8e8e8"></div>
<div class="t" style="left:911px;top:690px;font-size:10px;color:#4e4e4e;font-weight:normal;font-family:'Liberation Mono';">VisualLightBox.com</div>
</body></html>
